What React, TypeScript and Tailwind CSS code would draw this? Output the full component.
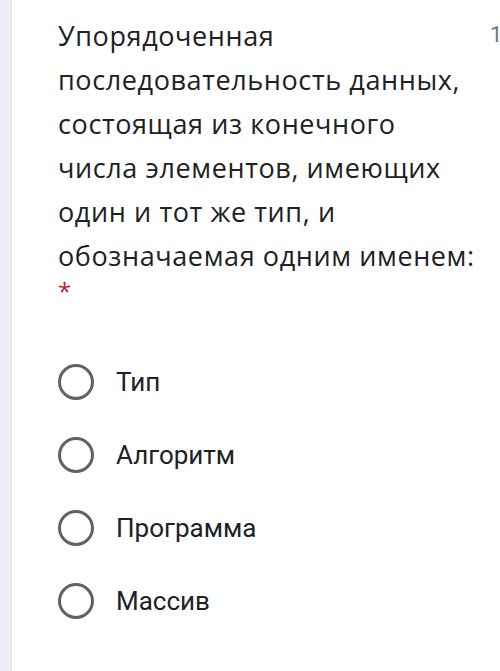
import React from "react";

const options = ["Тип", "Алгоритм", "Программа", "Массив"];

export default function App() {
  return (
    <div className="flex h-[671px] w-[500px] overflow-hidden bg-white">
      <div className="w-[12px] shrink-0 border-r border-[#e4e2ee] bg-[#efeef8]" />
      <div className="flex min-w-0 flex-1 flex-col pl-[46px]">
        <div className="flex">
          <div
            className="w-[424px] shrink-0 pt-[14px] text-[#202124]"
            style={{ fontFamily: '"Open Sans", sans-serif' }}
          >
            <p className="text-[27px] leading-[44px] tracking-[0.6px]">
              Упорядоченная последовательность данных, состоящая из конечного числа элементов, имеющих один и тот же тип, и обозначаемая одним именем:
            </p>
            <p className="mt-[2px] text-[24px] leading-[22px] text-[#b3261e]">*</p>
          </div>
          <div
            className="pl-[8px] pt-[18px] text-[22px] whitespace-nowrap text-[#70757a]"
            style={{ fontFamily: 'Roboto, sans-serif' }}
          >
            1 балл
          </div>
        </div>
        <div className="mt-[62px] flex flex-col gap-[37px]" style={{ fontFamily: 'Roboto, sans-serif' }}>
          {options.map((o) => (
            <div key={o} className="flex h-[36px] items-center">
              <div className="h-[36px] w-[36px] shrink-0 rounded-full border-[3px] border-[#5f6368]" />
              <span className="ml-[22px] text-[26px] text-[#202124]">{o}</span>
            </div>
          ))}
        </div>
      </div>
    </div>
  );
}
